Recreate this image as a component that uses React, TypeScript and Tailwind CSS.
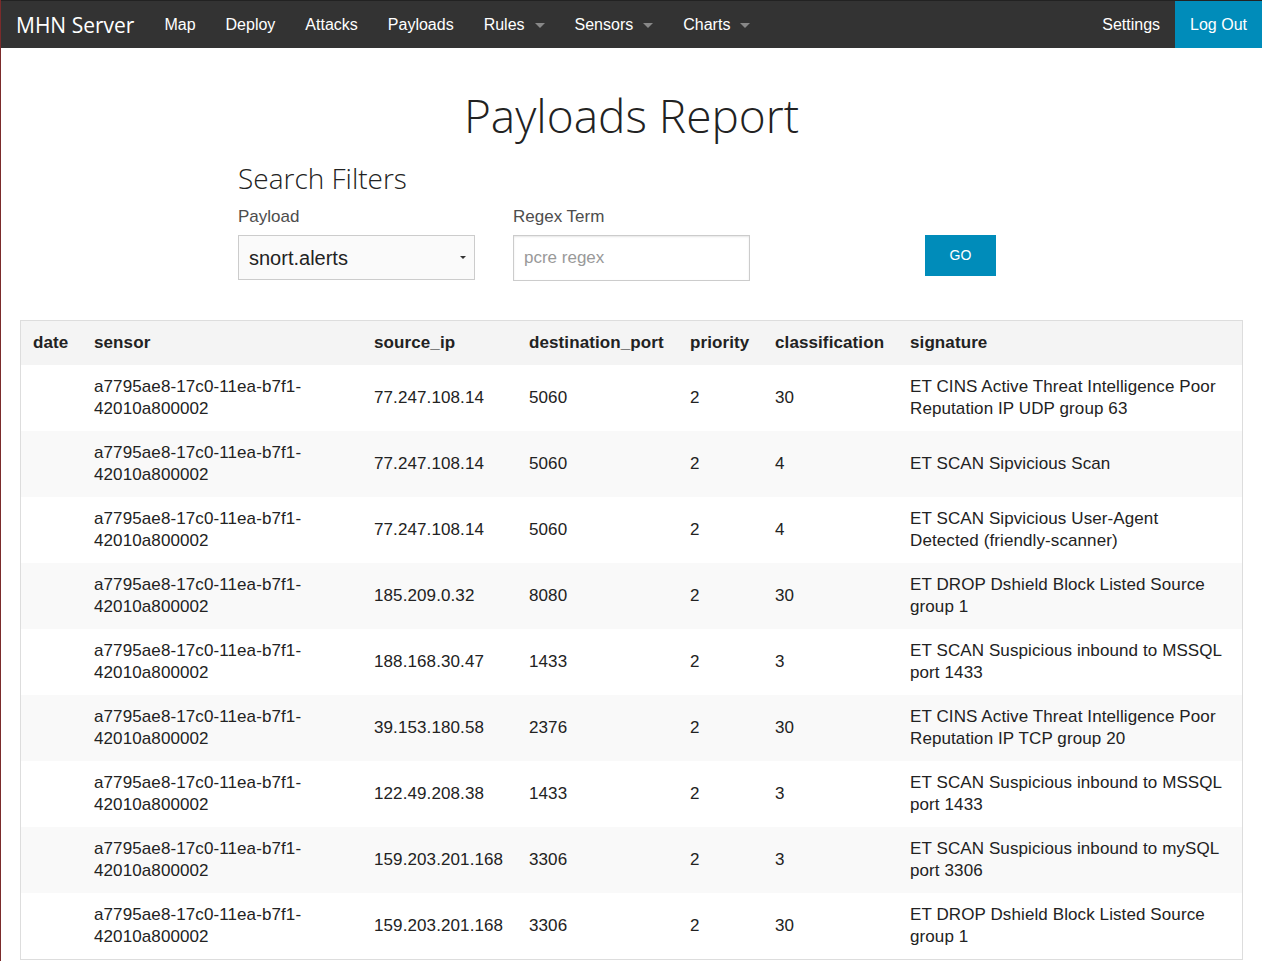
import { useState } from 'react'

interface PayloadRow {
  date: string
  sensor: string
  source_ip: string
  destination_port: string
  priority: string
  classification: string
  signature: string
}

const SENSOR = 'a7795ae8-17c0-11ea-b7f1-42010a800002'

const rows: PayloadRow[] = [
  { date: '', sensor: SENSOR, source_ip: '77.247.108.14', destination_port: '5060', priority: '2', classification: '30', signature: 'ET CINS Active Threat Intelligence Poor Reputation IP UDP group 63' },
  { date: '', sensor: SENSOR, source_ip: '77.247.108.14', destination_port: '5060', priority: '2', classification: '4', signature: 'ET SCAN Sipvicious Scan' },
  { date: '', sensor: SENSOR, source_ip: '77.247.108.14', destination_port: '5060', priority: '2', classification: '4', signature: 'ET SCAN Sipvicious User-Agent Detected (friendly-scanner)' },
  { date: '', sensor: SENSOR, source_ip: '185.209.0.32', destination_port: '8080', priority: '2', classification: '30', signature: 'ET DROP Dshield Block Listed Source group 1' },
  { date: '', sensor: SENSOR, source_ip: '188.168.30.47', destination_port: '1433', priority: '2', classification: '3', signature: 'ET SCAN Suspicious inbound to MSSQL port 1433' },
  { date: '', sensor: SENSOR, source_ip: '39.153.180.58', destination_port: '2376', priority: '2', classification: '30', signature: 'ET CINS Active Threat Intelligence Poor Reputation IP TCP group 20' },
  { date: '', sensor: SENSOR, source_ip: '122.49.208.38', destination_port: '1433', priority: '2', classification: '3', signature: 'ET SCAN Suspicious inbound to MSSQL port 1433' },
  { date: '', sensor: SENSOR, source_ip: '159.203.201.168', destination_port: '3306', priority: '2', classification: '3', signature: 'ET SCAN Suspicious inbound to mySQL port 3306' },
  { date: '', sensor: SENSOR, source_ip: '159.203.201.168', destination_port: '3306', priority: '2', classification: '30', signature: 'ET DROP Dshield Block Listed Source group 1' },
]

function Caret() {
  return <span className="ml-[10px] inline-block h-0 w-0 border-x-[5px] border-t-[5px] border-x-transparent border-t-[#888] align-middle" />
}

function Navbar() {
  const links: { label: string; caret?: boolean }[] = [
    { label: 'Map' },
    { label: 'Deploy' },
    { label: 'Attacks' },
    { label: 'Payloads' },
    { label: 'Rules', caret: true },
    { label: 'Sensors', caret: true },
    { label: 'Charts', caret: true },
  ]
  return (
    <nav className="flex h-[48px] items-stretch border-t border-[#222] bg-[#333] text-white">
      <div className="flex items-center pl-[15px] pr-[15px] pt-[1px] font-['Open_Sans',sans-serif] text-[21px] leading-none">MHN Server</div>
      <ul className="flex items-stretch text-[16px]">
        {links.map(l => (
          <li key={l.label} className="flex items-center px-[15px] pt-[1px]">
            {l.label}
            {l.caret && <Caret />}
          </li>
        ))}
      </ul>
      <div className="ml-auto flex items-stretch text-[16px]">
        <div className="flex items-center px-[15px] pt-[1px]">Settings</div>
        <div className="flex items-center bg-[#008cba] px-[15px] pt-[1px]">Log Out</div>
      </div>
    </nav>
  )
}

function Filters() {
  const [regex, setRegex] = useState('')
  return (
    <div className="pl-[237px]">
      <h3 className="font-['Open_Sans',sans-serif] text-[28px] font-light leading-none text-[#222]">Search Filters</h3>
      <div className="mt-[16px] flex items-start">
        <div className="w-[275px]">
          <label className="block text-[17px] leading-none text-[#4d4d4d]">Payload</label>
          <div className="mt-[10px] flex h-[45px] w-[237px] items-center justify-between border border-[#ccc] bg-[#fafafa] pl-[10px] pr-[8px] text-[20px] text-[#222]">
            <span>snort.alerts</span>
            <span className="inline-block h-0 w-0 border-x-[3px] border-t-[3px] border-x-transparent border-t-[#333]" />
          </div>
        </div>
        <div className="w-[412px]">
          <label className="block text-[17px] leading-none text-[#4d4d4d]">Regex Term</label>
          <input
            value={regex}
            onChange={e => setRegex(e.target.value)}
            placeholder="pcre regex"
            className="mt-[10px] h-[46px] w-[237px] border border-[#ccc] bg-white px-[10px] text-[17px] text-[#222] shadow-[inset_0_1px_2px_rgba(0,0,0,0.1)] outline-none placeholder:text-[#999]"
          />
        </div>
        <button className="mt-[27px] h-[41px] w-[71px] bg-[#008cba] text-[14px] text-white">GO</button>
      </div>
    </div>
  )
}

function PayloadTable() {
  const th = 'py-[11px] pl-[12px] pr-[4px] text-left text-[17px] leading-[22px] font-bold text-[#222] tracking-[0.1px]'
  const td = 'py-[11px] pl-[12px] pr-[14px] align-middle text-[17px] leading-[22px] text-[#222] tracking-[0.1px]'
  return (
    <div className="ml-[19px] mr-[19px] mt-[39px] border border-[#ddd]">
      <table className="w-full table-fixed border-collapse">
        <thead className="bg-[#f4f4f4]">
          <tr>
            <th className={`${th} w-[61px]`}>date</th>
            <th className={`${th} w-[280px]`}>sensor</th>
            <th className={`${th} w-[155px]`}>source_ip</th>
            <th className={`${th} w-[161px]`}>destination_port</th>
            <th className={`${th} w-[85px]`}>priority</th>
            <th className={`${th} w-[135px]`}>classification</th>
            <th className={th}>signature</th>
          </tr>
        </thead>
        <tbody>
          {rows.map((r, i) => (
            <tr key={i} className={i % 2 === 1 ? 'bg-[#f9f9f9]' : 'bg-white'}>
              <td className={td}>{r.date}</td>
              <td className={td}>
                a7795ae8-17c0-11ea-b7f1-
                <br />
                42010a800002
              </td>
              <td className={td}>{r.source_ip}</td>
              <td className={td}>{r.destination_port}</td>
              <td className={td}>{r.priority}</td>
              <td className={td}>{r.classification}</td>
              <td className={td}>{r.signature}</td>
            </tr>
          ))}
        </tbody>
      </table>
    </div>
  )
}

export default function App() {
  return (
    <div className="min-h-[961px] border-l border-[#7b2b2b] bg-white font-['Liberation_Sans',Arial,sans-serif]">
      <Navbar />
      <h1 className="mt-[41px] text-center font-['Open_Sans',sans-serif] text-[46px] font-light leading-[52px] text-[#222]">Payloads Report</h1>
      <div className="mt-[23px]">
        <Filters />
      </div>
      <PayloadTable />
    </div>
  )
}
